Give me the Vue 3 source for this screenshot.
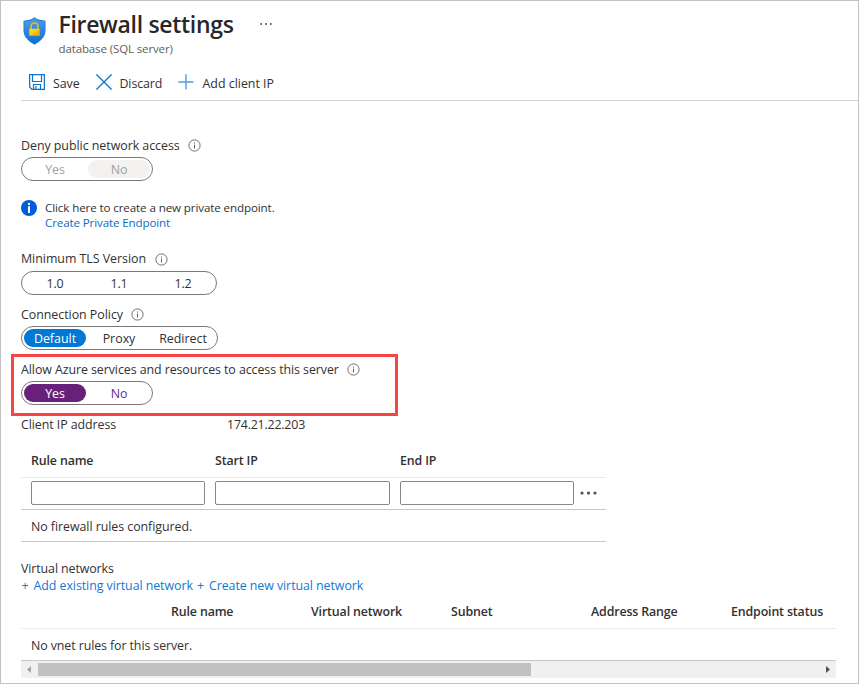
<script setup>
import { ref } from 'vue'

const groups = {
  deny: { label: 'Deny public network access', options: ['Yes', 'No'], selected: 'No', tone: 'disabled' },
  tls: { label: 'Minimum TLS Version', options: ['1.0', '1.1', '1.2'], selected: null, tone: 'plain' },
  policy: { label: 'Connection Policy', options: ['Default', 'Proxy', 'Redirect'], selected: 'Default', tone: 'blue' },
  azure: { label: 'Allow Azure services and resources to access this server', options: ['Yes', 'No'], selected: 'Yes', tone: 'purple' }
}
const ruleColumns = ['Rule name', 'Start IP', 'End IP']
const rule = ref(['', '', ''])
const vnetColumns = ['', 'Rule name', 'Virtual network', 'Subnet', 'Address Range', 'Endpoint status']
</script>

<template>
  <main class="page">
    <header class="head">
      <svg class="shield" viewBox="0 0 22 27" width="23" height="28">
        <defs>
          <linearGradient id="shieldFill" x1="0" y1="0" x2="0" y2="1">
            <stop offset="0" stop-color="#4a9fe8" />
            <stop offset="1" stop-color="#0f6fd0" />
          </linearGradient>
          <linearGradient id="lockFill" x1="0" y1="0" x2="1" y2="1">
            <stop offset="0" stop-color="#ffd83b" />
            <stop offset="0.5" stop-color="#fdcb13" />
            <stop offset="0.52" stop-color="#f5b80b" />
            <stop offset="1" stop-color="#f2b00a" />
          </linearGradient>
        </defs>
        <path d="M11 .3C13.8 2.8 17.2 3.3 21.6 3.5V13c0 6.600-5.500 10.900-10.600 13.800C5.900 23.900.4 19.600.4 13V3.500C4.800 3.300 8.200 2.800 11 .3Z" fill="#1b78d2" />
        <path d="M11 1.300C13.800 3.600 16.900 4.200 20.800 4.400V13c0 6-5 10-9.800 12.700C6.200 23 1.200 19 1.200 13V4.400C5.100 4.200 8.200 3.600 11 1.300Z" fill="url(#shieldFill)" />
        <path d="M7.700 12V9a3.300 3.300 0 0 1 6.600 0V12" fill="none" stroke="#f7b90c" stroke-width="1.500" />
        <rect x="6" y="11.300" width="10" height="6.900" rx=".5" fill="url(#lockFill)" />
      </svg>
      <div class="titles">
        <h1>Firewall settings</h1>
        <p>database (SQL server)</p>
      </div>
      <svg class="more" viewBox="0 0 12 2" width="12" height="2" fill="#444">
        <circle cx="1.200" cy="1" r=".9" /><circle cx="6" cy="1" r=".9" /><circle cx="10.800" cy="1" r=".9" />
      </svg>
    </header>

    <nav class="toolbar">
      <button class="save">
        <svg viewBox="0 0 16 16" width="16" height="16" fill="none" stroke="#0f74cc">
          <path d="M.6.6H15.400V15.400H3L.6 13Z" stroke-width="1.300" />
          <path d="M3.500.8V7.500H12.500V.8M4.500 15V10.500H11.500V15M6.900 12V15" stroke-width="1.200" />
        </svg>
        <span>Save</span>
      </button>
      <button class="discard">
        <svg viewBox="0 0 16 16" width="16" height="16" fill="none" stroke="#0f74cc" stroke-width="1.300">
          <path d="M.4.4 15.600 15.600M15.600.4.4 15.600" />
        </svg>
        <span>Discard</span>
      </button>
      <button class="add">
        <svg viewBox="0 0 16 16" width="16" height="16" fill="none" stroke="#4a9fe0" stroke-width="1.400">
          <path d="M.3 8H15.500M8 .3V15.500" />
        </svg>
        <span>Add client IP</span>
      </button>
    </nav>

    <section class="content">
      <template v-for="(g, key) in groups" :key="key">
        <div class="group" :class="key">
          <div class="label">
            <span>{{ g.label }}</span>
            <svg viewBox="0 0 13 13" width="13" height="13">
              <circle cx="6.500" cy="6.500" r="5.600" fill="none" stroke="#605e5c" stroke-width=".9" />
              <path d="M6.500 5.600V9.500M6.500 3.500V4.600" stroke="#605e5c" stroke-width="1" />
            </svg>
          </div>
          <div class="pill" :class="g.tone">
            <span v-for="o in g.options" :key="o" class="option" :class="{ on: o === g.selected }">{{ o }}</span>
          </div>
        </div>

        <div v-if="key === 'deny'" class="notice">
          <svg viewBox="0 0 16 16" width="16" height="16">
            <circle cx="8" cy="8" r="8" fill="#015cda" />
            <circle cx="8" cy="3.900" r="1.200" fill="#fff" />
            <rect x="7" y="6.200" width="2" height="6.800" fill="#fff" />
          </svg>
          <div>
            <p>Click here to create a new private endpoint.</p>
            <a>Create Private Endpoint</a>
          </div>
        </div>
      </template>

      <div class="client">
        <span class="client-name">Client IP address</span>
        <span class="ip">174.21.22.203</span>
      </div>

      <div class="rules">
        <div class="rules-row rules-head">
          <span v-for="c in ruleColumns" :key="c">{{ c }}</span>
        </div>
        <div class="rules-row rules-inputs">
          <input v-for="(c, i) in ruleColumns" :key="c" v-model="rule[i]" type="text" :aria-label="c" />
          <svg viewBox="0 0 17 4" width="17" height="4" fill="#505050">
            <circle cx="2" cy="2" r="1.600" /><circle cx="8.500" cy="2" r="1.600" /><circle cx="15" cy="2" r="1.600" />
          </svg>
        </div>
        <div class="empty">No firewall rules configured.</div>
      </div>

      <h2>Virtual networks</h2>
      <div class="links">
        <a><span class="plus">+</span>Add existing virtual network</a>
        <a><span class="plus">+</span>Create new virtual network</a>
      </div>
      <div class="vnet">
        <div class="vnet-head">
          <span v-for="c in vnetColumns" :key="c">{{ c }}</span>
        </div>
        <div class="empty">No vnet rules for this server.</div>
        <div class="scroll">
          <svg viewBox="0 0 4 7" width="4" height="7"><path d="M4 0V7L0 3.500Z" fill="#a3a3a3" /></svg>
          <div class="track"><div class="thumb"></div></div>
          <svg viewBox="0 0 4 7" width="4" height="7"><path d="M0 0V7L4 3.500Z" fill="#505050" /></svg>
        </div>
      </div>
    </section>
  </main>
</template>

<style>
body { margin: 0; background: #fff; }
</style>

<style scoped>
* { box-sizing: border-box; }
h1, h2, p { margin: 0; font-weight: 400; font-size: inherit; }
svg { display: block; flex: none; }
.page {
  width: 859px;
  height: 684px;
  border: 1px solid #c2c2c2;
  padding-left: 20px;
  overflow: hidden;
  background: #fff;
  color: #323130;
  font-family: "Open Sans", "Noto Sans", sans-serif;
  font-size: 12.4px;
  letter-spacing: -0.07px;
  line-height: 18px;
  white-space: nowrap;
}
.head { display: flex; height: 62px; padding-left: 2px; }
.shield { margin-top: 16px; }
.titles { width: 176px; margin-left: 12.5px; padding-top: 7px; }
h1 { font-size: 23px; line-height: 32px; font-weight: 600; letter-spacing: -0.31px; color: #292827; }
.titles p { font-size: 11.500px; line-height: 18px; letter-spacing: -0.12px; color: #605e5c; }
.more { margin: 22px 0 0 25.5px; }

.toolbar { display: flex; height: 38px; border-bottom: 1px solid #d2d2d2; padding: 2px 0 0 8px; }
button {
  display: flex;
  align-items: center;
  height: 34px;
  padding: 0;
  border: 0;
  background: none;
  color: inherit;
  font: inherit;
  letter-spacing: inherit;
}
button span { padding-top: 3px; }
.save { gap: 8px; width: 67px; }
.discard { gap: 7.5px; width: 82px; letter-spacing: -0.12px; }
.add { gap: 8.5px; letter-spacing: 0; }

.content { padding-top: 36px; }
.label { display: flex; align-items: center; gap: 8.500px; height: 18px; }
.deny .label, .tls .label, .policy .label { letter-spacing: -0.03px; }
.deny .label svg { margin-top: -1px; }
.tls .label svg { margin-top: 0; }
.pill {
  display: inline-flex;
  align-items: center;
  height: 24px;
  margin-top: 3px;
  padding: 2px;
  gap: 2px;
  border: 1px solid #7a7876;
  border-radius: 12px;
  vertical-align: top;
}
.option { width: 62px; height: 18px; border-radius: 9px; text-align: center; line-height: 20px; }
.disabled { color: #a19f9d; }
.disabled .on { background: #f3f2f1; }
.blue { padding-right: 3px; letter-spacing: 0; }
.blue .on { background: #0078d4; color: #fff; }
.purple .on { background: #68217a; color: #fff; }
.purple { color: #5c2d91; }
.deny .pill { margin-top: 2px; }
.tls { margin-top: 20px; }
.policy { margin-top: 10px; }
.policy .label, .azure .label { padding-top: 1px; line-height: 19px; }
.policy .label svg, .azure .label svg { margin-top: -1px; }
.azure .label { gap: 8px; }
.azure {
  width: 387px;
  height: 62px;
  margin: 4px 0 0 -10px;
  padding: 3px 7px 0;
  border: 3px solid #fa4343;
}

.notice { display: flex; gap: 8px; margin-top: 19px; height: 30px; font-size: 11.600px; line-height: 15px; letter-spacing: -0.11px; }
.notice a { display: block; letter-spacing: -0.13px; }
a { color: #0f6cbd; }

.client { display: flex; height: 18px; }
.client-name { width: 206px; }
.ip { letter-spacing: -0.2px; }

.rules { width: 585px; margin-top: 10px; border-bottom: 1px solid #c8c8c8; }
.rules-row { display: grid; grid-template-columns: 174px 175px 174px 17px; column-gap: 10px; padding-left: 10px; align-items: center; }
.rules-head, .vnet-head { font-weight: 600; letter-spacing: -0.14px; }
.rules-head { height: 34px; border-bottom: 1px solid #eaeaea; }
.rules-inputs { height: 32px; padding-bottom: 1px; border-bottom: 1px solid #c8c8c8; }
input { width: 100%; height: 24px; padding: 0 8px; border: 1px solid #8a8886; border-radius: 2px; background: #fff; font: inherit; }
.rules-inputs svg { margin: -1px 0 0 -4.500px; }
.empty { height: 31px; padding-left: 10px; line-height: 34px; letter-spacing: -0.05px; }

h2 { margin-top: 17px; line-height: 20px; height: 18px; letter-spacing: -0.1px; }
.links { display: flex; gap: 4px; height: 17px; padding-left: 0.500px; line-height: 17px; letter-spacing: -0.06px; }
.links a { color: #0f78d4; }
.plus { margin-right: 5px; }
.vnet { width: 815px; }
.vnet .empty { letter-spacing: -0.09px; }
.vnet-head { display: grid; grid-template-columns: repeat(5, 140px) 1fr; height: 35px; padding-left: 10px; line-height: 36px; border-bottom: 1px solid #eaeaea; }
.scroll { display: flex; align-items: center; height: 18px; padding: 0 6px 0 6px; border-top: 1px solid #c8c8c8; background: #f0f0f0; }
.track { flex: 1; margin-left: 7px; }
.thumb { width: 493px; height: 13px; background: #c1c1c1; }
</style>
